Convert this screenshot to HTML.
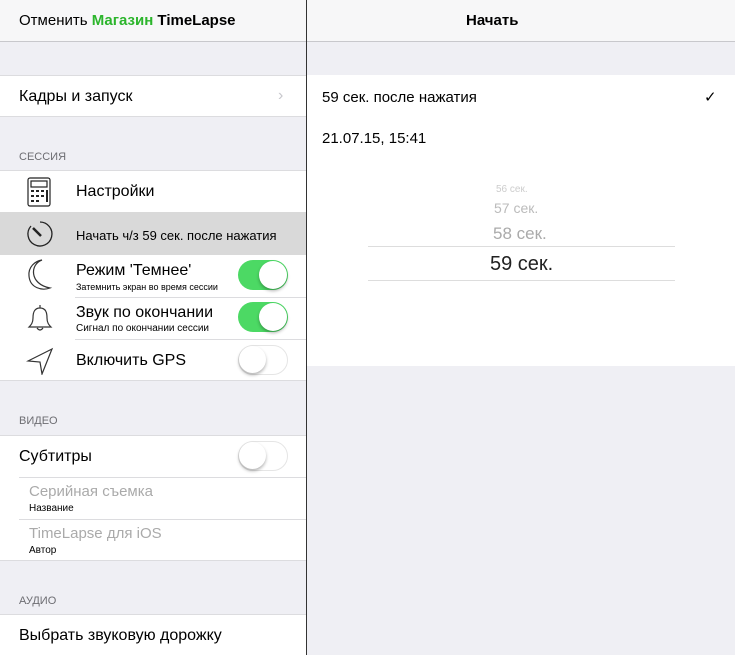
<!DOCTYPE html>
<html><head><meta charset="utf-8"><style>
*{margin:0;padding:0;box-sizing:border-box}
body{width:735px;height:655px;overflow:hidden;background:#efeff4;font-family:"Liberation Sans",sans-serif;position:relative;color:#000}
.a{position:absolute}
.w{position:absolute;background:#fff;left:0;width:306px}
.t{position:absolute;font-size:16px;white-space:nowrap}
.h{position:absolute;font-size:11px;color:#6d6d72;left:19px}
.sep{position:absolute;height:1px;background:#dcdcdf}
.tg{position:absolute;left:238px;width:50px;height:30px;border-radius:15px;background:#4cd964}
.tg::after{content:"";position:absolute;right:1px;top:1px;width:28px;height:28px;border-radius:50%;background:#fff;box-shadow:0 2px 3px rgba(0,0,0,.3)}
.tg.off{background:#fff;border:1.5px solid #e5e5e5}
.tg.off::after{left:0;top:0;right:auto;width:27px;height:27px}
.s{position:absolute;font-size:9px;left:76px}
</style></head><body>
<div class="a" style="left:0;top:0;width:735px;height:42px;background:#f7f7f8;border-bottom:1px solid #c8c8cc"></div>
<div class="t" style="left:19px;top:12px;font-size:15px">Отменить <b style="color:#2cb52c">Магазин</b> <b>TimeLapse</b></div>
<div class="t" style="left:466px;top:12px;font-size:15px;font-weight:bold">Начать</div>

<div class="w" style="top:75px;height:42px;border-top:1px solid #dcdcdf;border-bottom:1px solid #dcdcdf"></div>
<div class="t" style="left:19px;top:88px">Кадры и запуск</div>
<div class="t" style="left:278px;top:87px;color:#c7c7cc">&#x203A;</div>

<div class="h" style="top:151px">СЕССИЯ</div>
<div class="w" style="top:170px;height:211px;border-top:1px solid #dcdcdf;border-bottom:1px solid #dcdcdf"></div>
<div class="a" style="left:0;top:212px;width:306px;height:43px;background:#d9d9d9"></div>
<div class="sep" style="left:75px;top:297px;width:231px"></div>
<div class="sep" style="left:75px;top:339px;width:231px"></div>
<svg class="a" style="left:26px;top:177px" width="26" height="30" viewBox="0 0 26 30" fill="none" stroke="#222" stroke-width="1.2"><rect x="2" y="1" width="22" height="28" rx="2"/><rect x="5" y="4" width="16" height="6"/><g fill="#222" stroke="none"><rect x="5" y="13" width="3" height="2"/><rect x="10" y="13" width="3" height="2"/><rect x="15" y="13" width="3" height="2"/><rect x="5" y="18" width="3" height="2"/><rect x="10" y="18" width="3" height="2"/><rect x="15" y="18" width="3" height="2"/><rect x="5" y="23" width="3" height="2"/><rect x="10" y="23" width="3" height="2"/><rect x="20" y="13" width="2" height="12"/></g></svg>
<div class="t" style="left:76px;top:183px">Настройки</div>
<svg class="a" style="left:25px;top:219px" width="30" height="30" viewBox="0 0 30 30" fill="none" stroke="#222" stroke-width="1.3"><path d="M15 3A12 12 0 1 1 6 7"/><path d="M8 9L16 17" stroke-width="2.5"/></svg>
<div class="t" style="left:76px;top:228px;font-size:13px">Начать ч/з 59 сек. после нажатия</div>
<svg class="a" style="left:26px;top:258px" width="28" height="34" viewBox="0 0 28 34" fill="none" stroke="#333" stroke-width="1.2"><path d="M16 2C4 6 3 26 24 30C16 33 4 30 3 18C2 9 9 3 16 2Z"/></svg>
<div class="t" style="left:76px;top:262px">Режим 'Темнее'</div>
<div class="s" style="top:282px">Затемнить экран во время сессии</div>
<div class="tg" style="top:260px"></div>
<svg class="a" style="left:26px;top:302px" width="28" height="32" viewBox="0 0 28 32" fill="none" stroke="#333" stroke-width="1.2"><path d="M14 3v3M14 6C8 6 7 11 7 16C7 21 5 23 3 25H25C23 23 21 21 21 16C21 11 20 6 14 6ZM11 26Q14 30 17 26"/></svg>
<div class="t" style="left:76px;top:304px">Звук по окончании</div>
<div class="s" style="top:323px;font-size:10px">Сигнал по окончании сессии</div>
<div class="tg" style="top:302px"></div>
<svg class="a" style="left:26px;top:347px" width="28" height="28" viewBox="0 0 28 28" fill="none" stroke="#333" stroke-width="1.2"><path d="M26 2L2 14L14 15L16 27Z"/></svg>
<div class="t" style="left:76px;top:352px">Включить GPS</div>
<div class="tg off" style="top:345px"></div>

<div class="h" style="top:415px">ВИДЕО</div>
<div class="w" style="top:435px;height:126px;border-top:1px solid #dcdcdf;border-bottom:1px solid #dcdcdf"></div>
<div class="sep" style="left:19px;top:477px;width:287px"></div>
<div class="sep" style="left:19px;top:519px;width:287px"></div>
<div class="t" style="left:19px;top:448px">Субтитры</div>
<div class="tg off" style="top:441px"></div>
<div class="t" style="left:29px;top:483px;color:#aaa;font-size:15px">Серийная съемка</div>
<div class="s" style="left:29px;top:503px;font-size:10px">Название</div>
<div class="t" style="left:29px;top:525px;color:#aaa;font-size:15px">TimeLapse для iOS</div>
<div class="s" style="left:29px;top:545px;font-size:10px">Автор</div>

<div class="h" style="top:595px">АУДИО</div>
<div class="w" style="top:614px;height:41px;border-top:1px solid #dcdcdf"></div>
<div class="t" style="left:19px;top:627px">Выбрать звуковую дорожку</div>

<div class="a" style="left:306px;top:0;width:1px;height:655px;background:#333"></div>

<div class="a" style="left:307px;top:75px;width:428px;height:291px;background:#fff"></div>
<div class="t" style="left:322px;top:89px;font-size:15px">59 сек. после нажатия</div>
<div class="t" style="left:704px;top:88px;font-size:15px">✓</div>
<div class="t" style="left:322px;top:130px;font-size:15px">21.07.15, 15:41</div>
<div class="t" style="left:496px;top:184px;font-size:10px;color:#ccc">56 сек.</div>
<div class="t" style="left:494px;top:200px;font-size:14px;color:#bbb">57 сек.</div>
<div class="t" style="left:493px;top:224px;font-size:17px;color:#aaa">58 сек.</div>
<div class="a" style="left:368px;top:246px;width:307px;height:1px;background:#ddd"></div>
<div class="a" style="left:368px;top:280px;width:307px;height:1px;background:#ddd"></div>
<div class="t" style="left:490px;top:253px;font-size:20px;color:#222">59 сек.</div>
</body></html>
